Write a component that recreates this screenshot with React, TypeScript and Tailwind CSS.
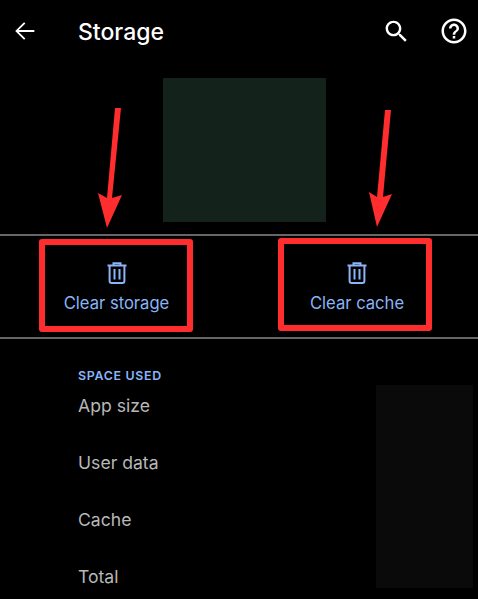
const font = "[font-family:Inter,Roboto,sans-serif]"

function TrashIcon() {
  return (
    <svg width="20" height="22" viewBox="0 0 20 22" fill="none" stroke="#8ab4f8" strokeWidth="2">
      <path d="M0.5 3.5H19.5" />
      <path d="M6.5 3.5V1.2H13.5V3.5" />
      <path d="M2.6 4V19C2.6 20.2 3.5 21 4.6 21H15.4C16.5 21 17.4 20.2 17.4 19V4" />
      <path d="M7.5 7V17.5" />
      <path d="M12.5 7V17.5" />
    </svg>
  )
}

function ClearButton({ label, className }: { label: string; className: string }) {
  return (
    <div className={`flex h-[93px] w-[154px] flex-col items-center rounded-[3px] border-[6px] border-[#ff2d2d] ${className}`}>
      <TrashIcon />
      <span className="mt-[9px] text-[16.6px] leading-[20px] text-[#8ab4f8]">{label}</span>
    </div>
  )
}

export default function App() {
  return (
    <div className={`relative h-[599px] w-[478px] overflow-hidden bg-black ${font}`}>
      <header className="flex h-[62px] items-center text-white">
        <svg className="ml-[11px]" width="28" height="28" viewBox="0 0 24 24" fill="white">
          <path d="M20 11.2H6.6l5.7-5.7L11.2 4.4 3.6 12l7.6 7.6 1.1-1.1-5.7-5.7H20v-1.6z" />
        </svg>
        <h1 className="mt-[1px] ml-[39px] text-[23px] leading-[30px] font-medium">Storage</h1>
        <svg className="ml-auto" width="29" height="29" viewBox="0 0 24 24" fill="white">
          <path d="M15.5 14h-.79l-.28-.27C15.41 12.59 16 11.11 16 9.5 16 5.91 13.09 3 9.5 3S3 5.91 3 9.5 5.91 16 9.5 16c1.61 0 3.09-.59 4.23-1.57l.27.28v.79l5 4.99L20.49 19l-4.99-5zm-6 0C7.01 14 5 11.99 5 9.5S7.01 5 9.5 5 14 7.01 14 9.5 11.99 14 9.5 14z" />
        </svg>
        <svg className="mr-[9px] ml-[28px]" width="30" height="30" viewBox="0 0 24 24" fill="white">
          <path d="M11 18h2v-2h-2v2zm1-16C6.48 2 2 6.48 2 12s4.48 10 10 10 10-4.48 10-10S17.52 2 12 2zm0 18c-4.41 0-8-3.59-8-8s3.59-8 8-8 8 3.59 8 8-3.59 8-8 8zm0-14c-2.21 0-4 1.79-4 4h2c0-1.1.9-2 2-2s2 .9 2 2c0 2-3 1.75-3 5h2c0-2.25 3-2.5 3-5 0-2.21-1.79-4-4-4z" />
        </svg>
      </header>

      <div className="mt-[16px] ml-[163px] h-[144px] w-[163px] bg-[#13221b]" />

      <div className="mt-[12px] flex h-[105px] items-start border-y-2 border-[#666666] pl-[39px]">
        <ClearButton label="Clear storage" className="mt-[3px] pt-[17px] pl-[1px]" />
        <ClearButton label="Clear cache" className="mt-[2px] ml-[85px] pt-[18px] pl-[4px]" />
      </div>

      <section className="flex justify-between">
        <div className="pt-[28px] pl-[78px]">
          <h2 className="text-[12.4px] leading-[18px] font-semibold tracking-[0.7px] text-[#8ab4f8]">SPACE USED</h2>
          <ul className="mt-[8px] text-[17.6px] text-[#b8b8b8]">
            <li className="h-[57px] leading-[26px]">App size</li>
            <li className="h-[57px] leading-[26px]">User data</li>
            <li className="h-[57px] leading-[26px]">Cache</li>
            <li className="h-[57px] leading-[26px]">Total</li>
          </ul>
        </div>
        <div className="mt-[46px] mr-[5px] h-[203px] w-[97px] bg-[#0a0a0a]" />
      </section>

      {/* red annotation arrows drawn over the screenshot */}
      <svg className="absolute top-0 left-0" width="478" height="240" viewBox="0 0 478 240" fill="#ff2d2d">
        <polygon points="115,108 121,108 112,198 122,195 107,228 98,193 107,198" />
        <polygon points="385,110 391,110 383,197 392,194 377,227 369,192 377,197" />
      </svg>
    </div>
  )
}
